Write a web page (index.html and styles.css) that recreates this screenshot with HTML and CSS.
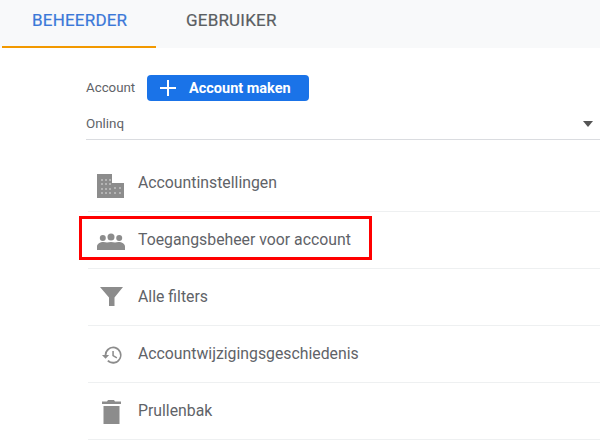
FILE: index.html
```html
<!DOCTYPE html>
<html lang="nl">
<head>
<meta charset="utf-8">
<title>Beheerder</title>
<link rel="stylesheet" href="styles.css">
</head>
<body>
<nav class="tabs">
  <div class="tab tab-active">BEHEERDER</div>
  <div class="tab tab-user">GEBRUIKER</div>
</nav>
<main class="panel">
  <div class="account-head">
    <span class="account-label">Account</span>
    <button class="create-btn">
      <svg class="plus" viewBox="0 0 18 18"><path d="M8 1h2v7h7v2h-7v7H8v-7H1V8h7z"/></svg>
      <span>Account maken</span>
    </button>
  </div>
  <div class="account-select">
    <span>Onlinq</span>
    <span class="caret"></span>
  </div>
  <ul class="menu">
    <li class="row">
      <svg class="icon" viewBox="0 0 28 28"><path d="M1 5h15v9h12v15H1z"/><path class="windows" d="M5 10h2v2H5zm4 0h2v2H9zm4 0h2v2h-2zM5 14h2v2H5zm4 0h2v2H9zm4 0h2v2h-2zM5 19h2v2H5zm4 0h2v2H9zm4 0h2v2h-2zM5 23h2v2H5zm4 0h2v2H9zm4 0h2v2h-2zM18 18h2v2h-2zm5 0h2v2h-2zM18 23h2v2h-2zm5 0h2v2h-2z"/></svg>
      <span>Accountinstellingen</span>
    </li>
    <li class="row">
      <svg class="icon" viewBox="0 0 28 28"><circle cx="15" cy="11" r="3.500"/><circle cx="6.800" cy="12" r="3"/><circle cx="23.200" cy="12" r="3"/><path d="M1 24v-3.500C1 18 4 16 7.500 16c1.300 0 2.500.2 3.500.6 1.200-.4 2.600-.6 4-.6s2.800.2 4 .6c1-.4 2.200-.6 3.500-.6 3.500 0 6.500 2 6.500 4.500V24z"/></svg>
      <span>Toegangsbeheer voor account</span>
      <div class="highlight"></div>
    </li>
    <li class="row">
      <svg class="icon" viewBox="0 0 28 28"><path d="M4 4h23l-8.500 10.500V23h-5.500v-8.500z"/></svg>
      <span>Alle filters</span>
    </li>
    <li class="row">
      <svg class="icon" viewBox="0 0 28 28"><g transform="translate(3.700 2.500) scale(.9)"><path d="M15 4.500a9.500 9.500 0 0 0-9.500 9.500H2.500l4 4.100 4-4.100H7.500a7.500 7.500 0 1 1 2.300 5.400l-1.500 1.500A9.500 9.500 0 1 0 15 4.500z"/><path d="M14 9.500h1.700v4.700l3.800 2.300-.8 1.300-4.700-2.900z"/></g></svg>
      <span>Accountwijzigingsgeschiedenis</span>
    </li>
    <li class="row">
      <svg class="icon" viewBox="0 0 28 28"><path d="M6 4.500h5L12 3h6l1 1.500h6V7H6zM7.500 9h16v18h-16z"/></svg>
      <span>Prullenbak</span>
    </li>
  </ul>
</main>
</body>
</html>
```
FILE: styles.css
```css
* { box-sizing: border-box; }
html, body { margin: 0; padding: 0; }
body {
  width: 600px;
  height: 442px;
  overflow: hidden;
  background: #fff;
  font-family: Roboto, "Liberation Sans", sans-serif;
  color: #5f6368;
}
.tabs {
  height: 48px;
  background: #f8f9fa;
  display: flex;
  padding-left: 2px;
}
.tab {
  height: 48px;
  font-size: 17px;
  font-weight: 400;
  -webkit-text-stroke: 0.2px currentColor;
  line-height: 41px;
  letter-spacing: 0.2px;
}
.tab-active {
  width: 154px;
  padding-left: 30px;
  color: #3b78d8;
  border-bottom: 2px solid #f29900;
}
.tab-user {
  padding-left: 30px;
  color: #5a5e62;
}
.panel { padding-left: 86px; }
.account-head {
  display: flex;
  align-items: center;
  height: 26px;
  margin-top: 27px;
}
.account-label {
  width: 61px;
  font-size: 13.300px;
  line-height: 22px;
  color: #5f6368;
}
.create-btn {
  width: 162px;
  height: 26px;
  border: 0;
  border-radius: 4px;
  background: #1a73e8;
  color: #fff;
  font-family: inherit;
  font-size: 14.500px;
  font-weight: 700;
  display: flex;
  align-items: center;
  padding: 0 0 0 12px;
}
.plus { width: 18px; height: 18px; fill: #fff; margin-right: 12px; }
.account-select {
  display: flex;
  justify-content: space-between;
  align-items: center;
  height: 33px;
  padding: 6px 7px 5px 0;
  border-bottom: 1px solid #dadce0;
  font-size: 13.400px;
  margin-top: 6px;
}
.caret {
  width: 0;
  height: 0;
  border-left: 5px solid transparent;
  border-right: 5px solid transparent;
  border-top: 6px solid #555;
}
.menu {
  list-style: none;
  margin: 15px 0 0 2px;
  padding: 0;
}
.row {
  position: relative;
  display: flex;
  align-items: center;
  height: 57px;
  border-bottom: 1px solid #eef0f1;
  font-size: 15.800px;
  color: #5f6368;
  padding-bottom: 1px;
}
.icon {
  width: 28px;
  height: 28px;
  fill: #8c8c8c;
  margin: 0 14px 0 8px;
  flex: none;
  overflow: visible;
}
.windows { fill: #b4b4b4; }
.highlight {
  position: absolute;
  left: -9px;
  top: 4px;
  width: 293px;
  height: 44px;
  border: 3px solid #f00;
}
```
